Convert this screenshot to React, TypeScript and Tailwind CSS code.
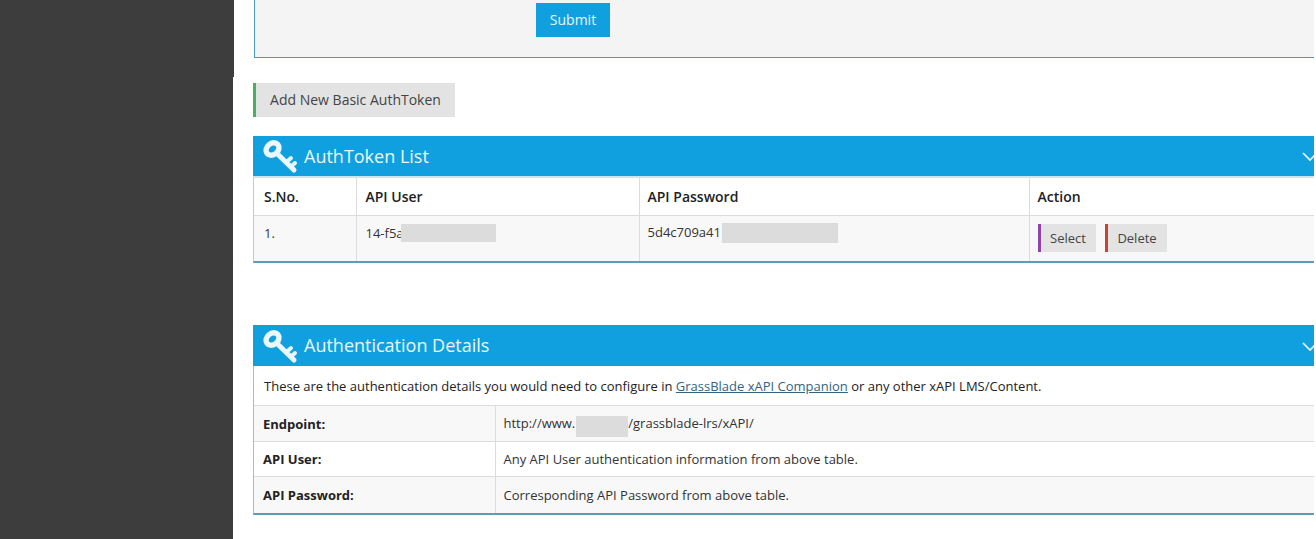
import React from 'react';

const KeyIcon = () => (
  <svg width="36" height="36" viewBox="0 0 36 36" fill="none" stroke="#eaf8fd" strokeLinecap="round" className="shrink-0 -ml-px">
    <ellipse cx="10.5" cy="11" rx="7" ry="5.6" strokeWidth="5.4" transform="rotate(-40 10.5 11)" />
    <path d="M16.5 17 L32 32" strokeWidth="5" />
    <path d="M24.5 24 L29 20" strokeWidth="4" />
    <path d="M29 28.5 L33 25" strokeWidth="4" />
  </svg>
);

const PanelHeader = ({ title, tall }: { title: string; tall?: boolean }) => (
  <div className={`flex items-center bg-[#11a0df] pl-[10px] overflow-hidden ${tall ? 'h-[41px]' : 'h-[40px]'}`}>
    <KeyIcon />
    <span className="ml-[6px] text-[18px] text-[#eaf8fd]">{title}</span>
    <svg width="16" height="10" viewBox="0 0 16 10" fill="none" stroke="#eaf8fd" strokeWidth="1.7" className="ml-auto -mr-[4px] mt-[2px] shrink-0">
      <path d="M1 1 L8 8 L15 1" />
    </svg>
  </div>
);

const Redacted = ({ w, h, shift }: { w: string; h: string; shift?: string }) => (
  <span className={`inline-block align-middle bg-[#dcdcdc] ${w} ${h} ${shift ?? ''}`} />
);

const ActionButton = ({ label, border, w }: { label: string; border: string; w: string }) => (
  <button className={`h-[28px] pt-[1px] bg-[#e3e3e3] border-l-[3px] text-[13px] text-[#444] ${border} ${w}`}>{label}</button>
);

export default function App() {
  return (
    <div className="flex h-[539px] overflow-hidden bg-white font-['Open_Sans',sans-serif] text-[13px] text-[#333]">
      <aside className="w-[233px] shrink-0 bg-[#3d3d3d]">
        <div className="h-[77px] w-[234px] bg-[#3d3d3d]" />
      </aside>

      <main className="flex-1 min-w-0 pl-[20px] pr-[2px]">
        <div className="ml-px h-[58px] border-l border-b border-[#4a9bbd] bg-[#f4f4f4] pl-[281px] pt-[3px]">
          <button className="h-[34px] w-[74px] pb-[2px] bg-[#11a0df] text-[14px] text-[#eaf8fd]">Submit</button>
        </div>

        <button className="mt-[25px] block h-[34px] w-[202px] pb-[2px] border-l-[3px] border-[#4caf5f] bg-[#e3e3e3] text-[14px] text-[#444]">
          Add New Basic AuthToken
        </button>

        <section className="mt-[19px]">
          <PanelHeader title="AuthToken List" />
          <div className="border-l border-b-2 border-l-[#a9d3e4] border-b-[#5d9cb8] border-t-[2px] border-t-[#cfe5ee]">
            <table className="w-full table-fixed border-collapse">
              <colgroup>
                <col className="w-[102px]" />
                <col className="w-[283px]" />
                <col className="w-[390px]" />
                <col />
              </colgroup>
              <thead>
                <tr className="h-[37px] border-b border-[#dcdcdc] text-left text-[14px] text-[#222]">
                  <th className="pl-[10px] font-semibold">S.No.</th>
                  <th className="border-l border-[#dcdcdc] pl-[9px] font-semibold">API User</th>
                  <th className="border-l border-[#dcdcdc] pl-[8px] font-semibold">API Password</th>
                  <th className="border-l border-[#dcdcdc] pl-[8px] font-semibold">Action</th>
                </tr>
              </thead>
              <tbody>
                <tr className="h-[46px] bg-[#f8f8f8]">
                  <td className="pl-[10px] pb-[9px]">1.</td>
                  <td className="border-l border-[#dcdcdc] pl-[9px] pb-[9px]">14-f5a<span className="-ml-[3px]"><Redacted w="w-[95px]" h="h-[18px]" shift="-translate-y-[2px]" /></span></td>
                  <td className="border-l border-[#dcdcdc] pl-[8px] pb-[9px]">5d4c709a41<span className="ml-px"><Redacted w="w-[116px]" h="h-[20px]" shift="-translate-y-[1px]" /></span></td>
                  <td className="border-l border-[#dcdcdc] pl-[8px]">
                    <div className="flex gap-[9px]">
                      <ActionButton label="Select" border="border-[#8e44ad]" w="w-[58px]" />
                      <ActionButton label="Delete" border="border-[#c0463a]" w="w-[62px]" />
                    </div>
                  </td>
                </tr>
              </tbody>
            </table>
          </div>
        </section>

        <section className="mt-[62px]">
          <PanelHeader title="Authentication Details" tall />
          <div className="border-l border-b-2 border-b-[#5d9cb8] border-l-[#8fc3da]">
            <p className="flex h-[39px] items-center pt-[2px] pl-[10px] text-[#222]">
              <span>
                These are the authentication details you would need to configure in{' '}
                <a href="#" className="text-[#34647f] underline">GrassBlade xAPI Companion</a> or any other xAPI LMS/Content.
              </span>
            </p>
            <table className="w-full table-fixed border-collapse">
              <colgroup>
                <col className="w-[241px]" />
                <col />
              </colgroup>
              <tbody>
                <tr className="h-[36px] border-y border-[#dcdcdc] bg-[#f8f8f8]">
                  <td className="pl-[9px] pt-[2px] font-bold text-[#222]">Endpoint:</td>
                  <td className="border-l border-[#dcdcdc] pl-[8px] pt-[3px]">http://www.<span className="ml-px"><Redacted w="w-[52px]" h="h-[21px]" shift="translate-y-[1px]" /></span>/grassblade-lrs/xAPI/</td>
                </tr>
                <tr className="h-[35px] border-b border-[#dcdcdc]">
                  <td className="pl-[9px] pt-[1px] font-bold text-[#222]">API User:</td>
                  <td className="border-l border-[#dcdcdc] pl-[8px] pt-[1px]">Any API User authentication information from above table.</td>
                </tr>
                <tr className="h-[36px] bg-[#f8f8f8]">
                  <td className="pl-[9px] pt-[1px] font-bold text-[#222]">API Password:</td>
                  <td className="border-l border-[#dcdcdc] pl-[8px] pt-[1px]">Corresponding API Password from above table.</td>
                </tr>
              </tbody>
            </table>
          </div>
        </section>
      </main>
    </div>
  );
}
